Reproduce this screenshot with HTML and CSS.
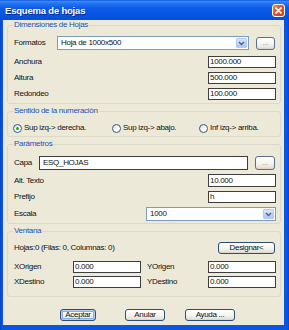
FILE: index.html
```html
<!DOCTYPE html>
<html lang="es">
<head>
<meta charset="utf-8">
<title>Esquema de hojas</title>
<link rel="stylesheet" href="styles.css">
</head>
<body>
<div class="window">
  <div class="titlebar">
    <span class="title">Esquema de hojas</span>
    <span class="close"><svg width="7" height="7" viewBox="0 0 7 7"><path d="M0.5 0.5 L6.5 6.5 M6.5 0.5 L0.5 6.5" stroke="#fff" stroke-width="1.6"/></svg></span>
  </div>
  <div class="frame">
    <div class="client">
      <fieldset class="group g1">
        <legend>Dimensiones de Hojas</legend>
        <div class="row first">
          <span class="lbl w-formatos">Formatos</span>
          <div class="combo w-combo1"><span class="ctext">Hoja de 1000x500</span><span class="dd"><svg width="7" height="5" viewBox="0 0 7 5"><path d="M1 1 L3.5 3.5 L6 1" fill="none" stroke="#4D6185" stroke-width="1.4"/></svg></span></div>
          <span class="btn small">...</span>
        </div>
        <div class="row between gap6"><span class="lbl">Anchura</span><div class="field w68">1000.000</div></div>
        <div class="row between gap4"><span class="lbl">Altura</span><div class="field w68">500.000</div></div>
        <div class="row between gap4"><span class="lbl">Redondeo</span><div class="field w68">100.000</div></div>
      </fieldset>

      <fieldset class="group g2">
        <legend>Sentido de la numeración</legend>
        <div class="row radios">
          <label class="radio r1"><span class="dot on"></span>Sup izq-&gt; derecha.</label>
          <label class="radio r2"><span class="dot"></span>Sup izq-&gt; abajo.</label>
          <label class="radio r3"><span class="dot"></span>Inf izq-&gt; arriba.</label>
        </div>
      </fieldset>

      <fieldset class="group g3">
        <legend>Parámetros</legend>
        <div class="row first">
          <span class="lbl w-capa">Capa</span>
          <div class="field w-capa-in tall">ESQ_HOJAS</div>
          <span class="btn small capa-btn">...</span>
        </div>
        <div class="row between gap4"><span class="lbl">Alt. Texto</span><div class="field w68 h13">10.000</div></div>
        <div class="row between gap4"><span class="lbl">Prefijo</span><div class="field w68">h</div></div>
        <div class="row between gap4"><span class="lbl">Escala</span>
          <div class="combo w130"><span class="ctext">1000</span><span class="dd"><svg width="7" height="5" viewBox="0 0 7 5"><path d="M1 1 L3.5 3.5 L6 1" fill="none" stroke="#4D6185" stroke-width="1.4"/></svg></span></div>
        </div>
      </fieldset>

      <fieldset class="group g4">
        <legend>Ventana</legend>
        <div class="row between hojas"><span class="lbl">Hojas:0 (Filas: 0, Columnas: 0)</span><span class="btn designar">Designar&lt;</span></div>
        <div class="row xy gap7">
          <span class="lbl w-x">XOrigen</span><div class="field w68">0.000</div>
          <span class="lbl w-y">YOrigen</span><div class="field w68">0.000</div>
        </div>
        <div class="row xy gap3">
          <span class="lbl w-x">XDestino</span><div class="field w68">0.000</div>
          <span class="lbl w-y">YDestino</span><div class="field w68">0.000</div>
        </div>
      </fieldset>

      <div class="actions">
        <span class="btn default b-aceptar">Aceptar</span>
        <span class="btn b-anular">Anular</span>
        <span class="btn b-ayuda">Ayuda ...</span>
      </div>
    </div>
  </div>
</div>
</body>
</html>
```

FILE: styles.css
```css
html, body {
  margin: 0;
  padding: 0;
  background: #ffffff;
}
body {
  font-family: "Liberation Sans", Arial, sans-serif;
  font-size: 8px;
  letter-spacing: -0.3px;
  line-height: 10px;
  color: #111;
}
.window {
  width: 289px;
  height: 330px;
  display: flex;
  flex-direction: column;
  background: #0B55E3;
}
.titlebar {
  height: 20px;
  flex: none;
  display: flex;
  align-items: center;
  justify-content: space-between;
  padding: 0 4px 0 5px;
  background: linear-gradient(to bottom, #0A4FD8 0%, #3A8BF8 6%, #2673F2 18%, #0C5BE8 40%, #0655E3 75%, #0A4DD2 100%);
}
.title {
  color: #fff;
  font-weight: bold;
  font-size: 9.5px;
  letter-spacing: -0.2px;
  text-shadow: 1px 1px 0 #0A2A8A;
  margin-top: 1px;
}
.close {
  width: 13px;
  height: 13px;
  box-sizing: border-box;
  border: 1px solid #fff;
  border-radius: 3px;
  background: linear-gradient(135deg, #F08A68 0%, #E0542F 45%, #C8401E 100%);
  display: flex;
  align-items: center;
  justify-content: center;
  margin-top: 1px;
}
.frame {
  flex: 1;
  display: flex;
  padding: 0 5px 5px 3px;
  background: linear-gradient(to right, #0A44C8 0, #0B55E3 2px, #0B55E3 calc(100% - 2px), #0A44C8 100%);
}
.client {
  flex: 1;
  background: #ECE9D8;
  padding: 0 3px 0 4px;
  display: flex;
  flex-direction: column;
}
.group {
  margin: 0;
  padding: 0 4px 3px 6px;
  border: 1px solid #DCD9C8;
  border-radius: 3px;
  min-width: 0;
}
.group legend {
  color: #2353B5;
  padding: 0 1px;
  margin-left: -1px;
  line-height: 10px;
}
.g2, .g3, .g4 { margin-top: 2px; }
.g3 { padding-bottom: 2px; }
.g4 { padding-bottom: 8px; }

.row {
  display: flex;
  align-items: center;
}
.row.between { justify-content: space-between; }
.row.first { margin-top: 6px; }
.g3 .row.first { margin-top: 7px; }
.gap3 { margin-top: 3px; }
.gap4 { margin-top: 4px; }
.gap6 { margin-top: 6px; }
.gap7 { margin-top: 7px; }

.lbl { white-space: nowrap; }
.w-formatos { width: 43px; flex: none; }
.w-capa { width: 25px; flex: none; }
.w-x { width: 59px; flex: none; }
.w-y { width: 61px; flex: none; padding-left: 6px; box-sizing: border-box; width: 67px; }

.field {
  box-sizing: border-box;
  height: 12px;
  background: #fff;
  border: 1px solid #3E3E3E;
  padding-left: 1px;
  line-height: 10px;
  white-space: nowrap;
  overflow: hidden;
}
.field.h13 { height: 13px; line-height: 11px; }
.field.tall { height: 14px; line-height: 12px; padding-left: 3px; }
.w68 { width: 68px; flex: none; }
.w-capa-in { width: 209px; flex: none; }

.combo {
  box-sizing: border-box;
  height: 14px;
  background: #fff;
  border: 1px solid #7F9DB9;
  display: flex;
  align-items: center;
  justify-content: space-between;
  padding: 1px;
  flex: none;
}
.w-combo1 { width: 192px; }
.w130 { width: 130px; }
.ctext { padding-left: 2px; }
.dd {
  width: 11px;
  height: 10px;
  box-sizing: border-box;
  border: 1px solid #B4C8F4;
  border-radius: 1px;
  background: linear-gradient(to bottom, #DCE6FC 0%, #C1D3FA 50%, #AFC6F6 100%);
  display: flex;
  align-items: center;
  justify-content: center;
}

.btn {
  box-sizing: border-box;
  height: 12px;
  border: 1px solid #2E4E7A;
  border-radius: 3px;
  background: linear-gradient(to bottom, #FFFFFF 0%, #F6F5F0 50%, #E4E1D8 90%, #D3CFC4 100%);
  display: inline-flex;
  align-items: center;
  justify-content: center;
  line-height: 10px;
  color: #111;
  flex: none;
  white-space: nowrap;
}
.btn.small {
  width: 19px;
  height: 13px;
  margin-left: 7px;
  color: #9A9A90;
  border-color: #5A6F8C;
}
.btn.capa-btn { width: 20px; height: 14px; }
.btn.designar { width: 57px; margin-right: 1px; }
.hojas { margin-top: 6px; }

.radios { margin-top: 7px; height: 10px; }
.radio {
  display: flex;
  align-items: center;
  white-space: nowrap;
  flex: none;
}
.r1 { width: 99px; margin-left: -1px; }
.r2 { width: 87px; }
.dot {
  width: 7px;
  height: 7px;
  border: 1px solid #2A5C8C;
  border-radius: 50%;
  background: linear-gradient(135deg, #DCDCD6 0%, #FFFFFF 70%);
  margin-right: 2px;
  position: relative;
  flex: none;
}
.dot.on::after {
  content: "";
  position: absolute;
  left: 2px;
  top: 2px;
  width: 3px;
  height: 3px;
  border-radius: 50%;
  background: #2CA12C;
}

.actions {
  display: flex;
  margin-top: 12px;
}
.b-aceptar { width: 36px; margin-left: 53px; }
.b-anular { width: 40px; margin-left: 29px; }
.b-ayuda { width: 50px; margin-left: 20px; }
.btn.default {
  box-shadow: inset 0 0 0 1px #B6CCF4, inset 0 0 0 2px #8EAEEA;
}
```
